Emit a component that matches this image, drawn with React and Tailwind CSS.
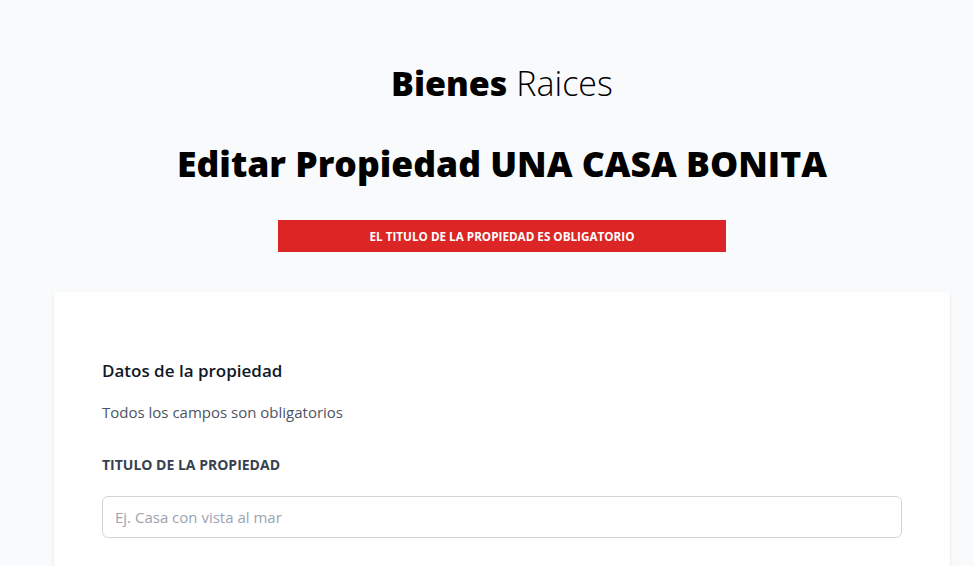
import React, { useState } from 'react';

export default function App() {
    const [titulo, setTitulo] = useState('');

    return (
        <div className="min-h-screen bg-[#f9fafb] pl-[30px] text-gray-900 font-['Open_Sans',sans-serif]">
            {/* Header */}
            <header className="pt-[63px] pb-10">
                <h1 className="text-center text-[34px] leading-[40px] text-black">
                    <span className="font-extrabold">Bienes</span>{' '}
                    <span className="font-light">Raices</span>
                </h1>
            </header>

            <main className="mx-auto max-w-4xl">
                <h2 className="text-center text-[35.5px] leading-[40px] font-extrabold text-black">
                    Editar Propiedad UNA CASA BONITA
                </h2>

                {/* Errores */}
                <div className="mx-auto mt-[37px] max-w-md bg-[#dc2626] py-2 text-center text-[11.7px] leading-4 font-bold uppercase text-white">
                    El titulo de la propiedad es obligatorio
                </div>

                {/* Formulario */}
                <form className="mt-10 rounded bg-white px-12 pt-[65px] pb-10 shadow-sm">
                    <h3 className="text-[17px] leading-7 font-semibold text-[#111827]">Datos de la propiedad</h3>
                    <p className="mt-[15px] text-[15px] leading-6 text-[#4b5563]">Todos los campos son obligatorios</p>

                    <div className="mt-[31px]">
                        <label htmlFor="titulo" className="block text-sm leading-5 font-bold uppercase text-[#374151]">
                            Titulo de la propiedad
                        </label>
                        <input
                            id="titulo"
                            type="text"
                            value={titulo}
                            onChange={(e) => setTitulo(e.target.value)}
                            placeholder="Ej. Casa con vista al mar"
                            className="mt-[21px] block h-[42px] w-full rounded-md border border-[#d1d5db] px-3 text-[15px] placeholder-[#9ca3af] outline-none"
                        />
                    </div>
                </form>
            </main>
        </div>
    );
}
